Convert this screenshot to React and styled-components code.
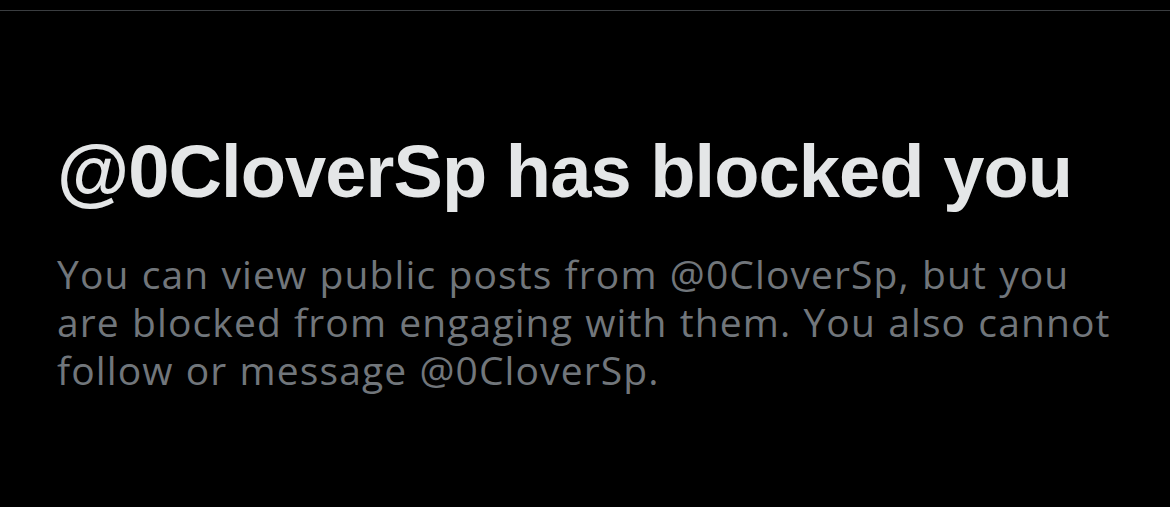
import React from 'react';
import styled, { createGlobalStyle } from 'styled-components';

const GlobalStyle = createGlobalStyle`
  html, body {
    margin: 0;
    padding: 0;
    background: #000000;
  }
`;

const Screen = styled.div`
  width: 1170px;
  height: 507px;
  background: #000000;
  border-top: 1px solid #3a3d40;
  margin-top: 10px;
  box-sizing: border-box;
  overflow: hidden;
`;

const Content = styled.div`
  display: flex;
  flex-direction: column;
  padding: 118px 57px 0;
  gap: 35px;
`;

const Title = styled.h1`
  margin: 0;
  font-family: 'Liberation Sans', Arial, sans-serif;
  font-weight: bold;
  font-size: 74px;
  line-height: 86px;
  letter-spacing: -0.9px;
  color: #e4e6e7;
`;

const Body = styled.p`
  margin: 0;
  font-family: 'Open Sans', sans-serif;
  font-size: 39px;
  line-height: 48px;
  letter-spacing: 1.1px;
  word-spacing: 1px;
  color: #71767b;
  max-width: 1060px;
`;

const App = () => {
  return (
    <>
      <GlobalStyle />
      <Screen>
        <Content>
          <Title>@0CloverSp has blocked you</Title>
          <Body>
            You can view public posts from @0CloverSp, but you are blocked from
            engaging with them. You also cannot follow or message @0CloverSp.
          </Body>
        </Content>
      </Screen>
    </>
  );
};

export default App;
